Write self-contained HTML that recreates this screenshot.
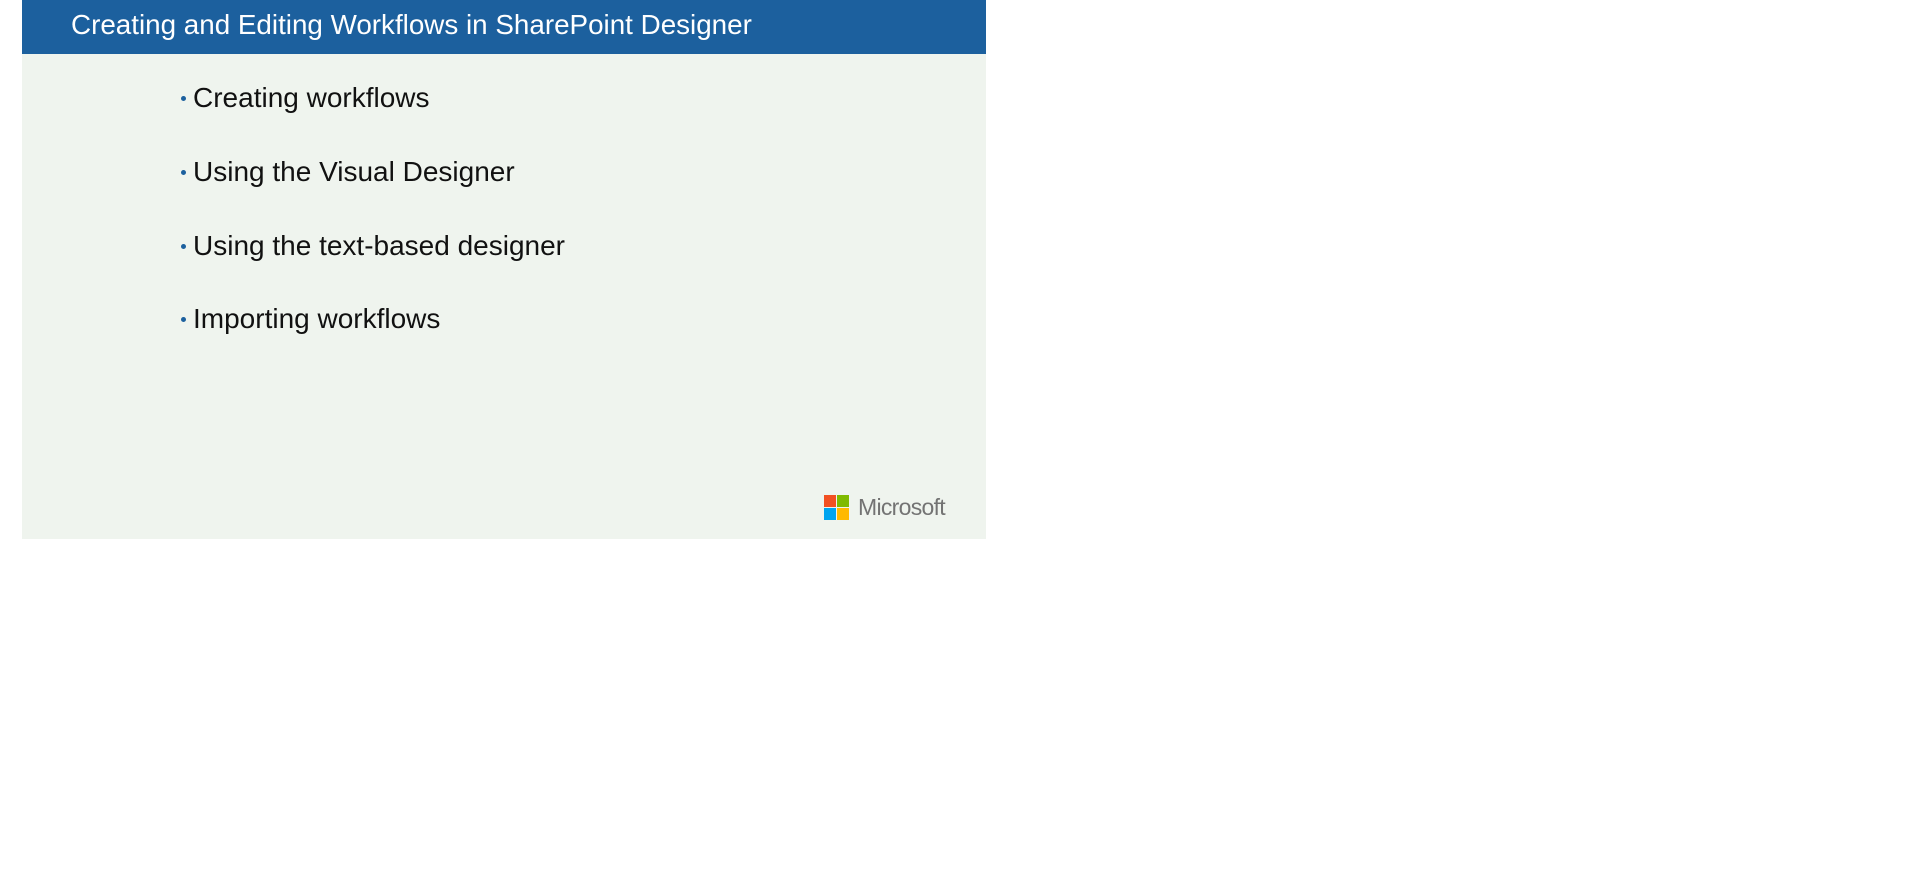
<!DOCTYPE html>
<html><head><meta charset="utf-8"><style>
body{margin:0;width:1914px;height:877px;background:#fff;font-family:"Liberation Sans",sans-serif;position:relative;overflow:hidden}
.slide{position:absolute;left:22px;top:0;width:964px;height:539px;background:#eff4ee}
.hdr{position:absolute;left:0;top:0;width:964px;height:54px;background:#1c609e}
.title{position:absolute;left:49px;top:9px;color:#fff;font-size:27.8px;white-space:nowrap}
.b{position:absolute;left:171px;font-size:28px;color:#111;white-space:nowrap}
.b:before{content:"";position:absolute;left:-12px;top:14px;width:5px;height:5px;border-radius:50%;background:#1c609e}
.logo{position:absolute;left:802px;top:495px}
.sq{position:absolute;width:12px;height:12px}
.ms{position:absolute;left:836px;top:494px;font-size:23px;color:#737373;letter-spacing:-0.7px}
</style></head><body>
<div class="slide">
<div class="hdr"><div class="title">Creating and Editing Workflows in SharePoint Designer</div></div>
<div class="b" style="top:82px">Creating workflows</div>
<div class="b" style="top:156px">Using the Visual Designer</div>
<div class="b" style="top:230px">Using the text-based designer</div>
<div class="b" style="top:303px">Importing workflows</div>
<div class="logo">
<div class="sq" style="left:0;top:0;background:#f25022"></div>
<div class="sq" style="left:13px;top:0;background:#7fba00"></div>
<div class="sq" style="left:0;top:13px;background:#00a4ef"></div>
<div class="sq" style="left:13px;top:13px;background:#ffb900"></div>
</div>
<div class="ms">Microsoft</div>
</div>
</body></html>
